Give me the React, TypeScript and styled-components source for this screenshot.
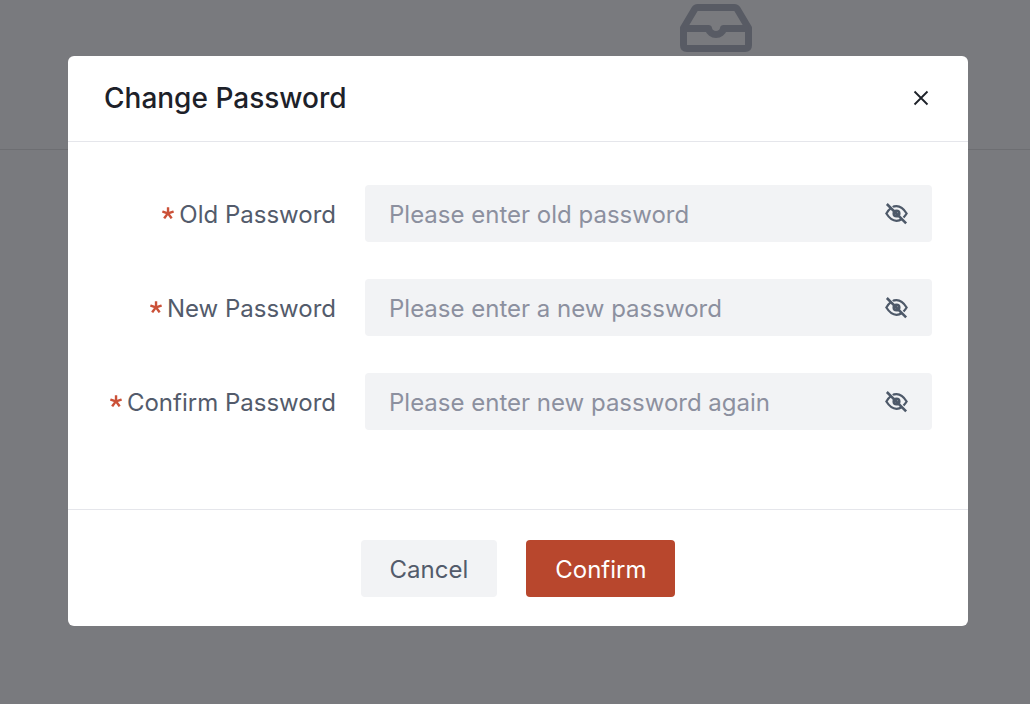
import React, { useState } from 'react';
import styled, { createGlobalStyle } from 'styled-components';

const GlobalStyle = createGlobalStyle`
  *, *::before, *::after { box-sizing: border-box; }
  html, body { margin: 0; }
  body {
    background: #797a7e;
    font-family: Inter, "Open Sans", sans-serif;
    color: #1d2129;
  }
  button, input { font: inherit; }
`;

const Page = styled.div`
  position: relative;
  min-height: 100vh;
`;

const Backdrop = styled.div`
  position: absolute;
  inset: 0;
  z-index: 0;
`;

const EmptyPanel = styled.div`
  display: flex;
  justify-content: center;
  height: 150px;
  padding-left: 402px;
  border-bottom: 1px solid #6d6e72;
`;

const Overlay = styled.div`
  position: relative;
  z-index: 1;
  min-height: 100vh;
  padding: 56px 62px 78px 68px;
`;

const Dialog = styled.section`
  background: #fff;
  border-radius: 6px;
`;

const Header = styled.header`
  display: flex;
  align-items: center;
  justify-content: space-between;
  height: 86px;
  padding: 0 36px 2px;
  border-bottom: 1px solid #e5e6eb;
`;

const Title = styled.h1`
  margin: 0;
  font-size: 28px;
  font-weight: 450;
  line-height: 40px;
`;

const IconButton = styled.button`
  display: flex;
  padding: 0;
  border: 0;
  background: none;
  color: inherit;
  cursor: pointer;
`;

const Body = styled.div`
  display: grid;
  gap: 37px;
  padding: 43px 36px 79px;
`;

const Row = styled.div`
  display: grid;
  grid-template-columns: 232px 1fr;
  align-items: center;
  gap: 29px;
`;

const Label = styled.label`
  display: flex;
  align-items: center;
  justify-content: flex-end;
  gap: 5px;
  padding-top: 2px;
  color: #535b6b;
  font-size: 24px;
  line-height: 40px;
  white-space: nowrap;
`;

const Field = styled.div`
  display: flex;
  align-items: center;
  height: 57px;
  padding: 0 22px 0 24px;
  border-radius: 4px;
  background: #f2f3f5;
  color: #4e5969;
`;

const Input = styled.input`
  flex: 1;
  min-width: 0;
  padding: 2px 0 0;
  border: 0;
  outline: 0;
  background: none;
  color: #1d2129;
  font-size: 24px;
  line-height: 40px;
  &::placeholder { color: #8c909f; opacity: 1; }
`;

const Footer = styled.footer`
  display: flex;
  justify-content: center;
  gap: 29px;
  padding: 30px 36px 29px;
  border-top: 1px solid #e5e6eb;
`;

const Button = styled.button<{ $primary?: boolean }>`
  height: 57px;
  padding: 2px 29px 0;
  border: 0;
  border-radius: 4px;
  background: ${(p) => (p.$primary ? '#b8472d' : '#f2f3f5')};
  color: ${(p) => (p.$primary ? '#fff' : '#535b6b')};
  font-size: 24px;
  line-height: 40px;
  cursor: pointer;
`;

const InboxIcon = () => (
  <svg width="72" height="56" viewBox="0 0 72 56" fill="none" stroke="#585b64" strokeWidth="7" strokeLinejoin="round" aria-hidden="true">
    <path d="M3.500 45V28L14.500 9.500Q15.500 7.500 18 7.500H54Q56.500 7.500 57.500 9.500L68.500 28V45Q68.500 48.500 65 48.500H7Q3.500 48.500 3.500 45Z" />
    <path d="M3.500 28.500H28.500C30 36.500 42 36.500 43.500 28.500H68.500" />
  </svg>
);

const CloseIcon = () => (
  <svg width="22" height="22" viewBox="0 0 48 48" fill="none" stroke="currentColor" strokeWidth="4" aria-hidden="true">
    <path d="M9.857 9.858 38.142 38.142M38.142 9.858 9.857 38.142" />
  </svg>
);

const RequiredMark = styled.svg`
  flex: none;
  width: 12px;
  height: 12px;
  margin-bottom: 4px;
  fill: #cb5138;
`;

const RequiredIcon = () => (
  <RequiredMark viewBox="0 0 1024 1024" aria-hidden="true">
    <path d="M583.338667 17.066667c18.773333 0 34.133333 15.360000 34.133333 34.133333v349.013333l313.344-101.888a34.133333 34.133333 0 0 1 43.008 22.016l42.154667 129.706667a34.133333 34.133333 0 0 1-21.845334 43.178667l-315.733333 102.400 208.896 287.744a34.133333 34.133333 0 0 1-7.509333 47.786666l-110.421334 80.213334a34.133333 34.133333 0 0 1-47.786666-7.509334L505.685333 706.218667 288.426667 1005.226667a34.133333 34.133333 0 0 1-47.786667 7.509333l-110.421333-80.213333a34.133333 34.133333 0 0 1-7.509334-47.786667l214.186667-295.253333L29.013333 489.813333a34.133333 34.133333 0 0 1-22.016-43.008l42.154667-129.877333a34.133333 34.133333 0 0 1 43.008-22.016l320.512 104.106667L412.672 51.200c0-18.773333 15.360000-34.133333 34.133333-34.133333h136.533334z" />
  </RequiredMark>
);

const EyeInvisibleIcon = () => (
  <svg width="27" height="27" viewBox="0 0 48 48" fill="none" stroke="currentColor" strokeWidth="4" aria-hidden="true">
    <path d="M14 14.500c-2.690 2-5.415 5.330-8 9.500 5.373 8.667 11.373 13 18 13 3.325 0 6.491-1.090 9.500-3.271M17.463 12.500C19 11 21.750 11 24 11c6.627 0 12.627 4.333 18 13-1.766 2.848-3.599 5.228-5.500 7.140" />
    <path d="M29 24a5 5 0 1 1-10 0 5 5 0 0 1 10 0ZM6.852 7.103l34.294 34.294" strokeWidth="4.500" />
  </svg>
);

type PasswordRowProps = { id: string; label: string; placeholder: string };

function PasswordRow({ id, label, placeholder }: PasswordRowProps) {
  const [visible, setVisible] = useState(false);
  return (
    <Row>
      <Label htmlFor={id}>
        <RequiredIcon />
        {label}
      </Label>
      <Field>
        <Input id={id} type={visible ? 'text' : 'password'} placeholder={placeholder} required />
        <IconButton type="button" aria-label="Toggle visibility" onClick={() => setVisible(!visible)}>
          <EyeInvisibleIcon />
        </IconButton>
      </Field>
    </Row>
  );
}

export default function App() {
  return (
    <Page>
      <GlobalStyle />
      <Backdrop>
        <EmptyPanel>
          <InboxIcon />
        </EmptyPanel>
      </Backdrop>
      <Overlay>
        <Dialog role="dialog" aria-modal="true" aria-labelledby="dialog-title">
          <Header>
            <Title id="dialog-title">Change Password</Title>
            <IconButton type="button" aria-label="Close">
              <CloseIcon />
            </IconButton>
          </Header>
          <form onSubmit={(e) => e.preventDefault()}>
            <Body>
              <PasswordRow id="old-password" label="Old Password" placeholder="Please enter old password" />
              <PasswordRow id="new-password" label="New Password" placeholder="Please enter a new password" />
              <PasswordRow id="confirm-password" label="Confirm Password" placeholder="Please enter new password again" />
            </Body>
            <Footer>
              <Button type="button">Cancel</Button>
              <Button type="submit" $primary>Confirm</Button>
            </Footer>
          </form>
        </Dialog>
      </Overlay>
    </Page>
  );
}
